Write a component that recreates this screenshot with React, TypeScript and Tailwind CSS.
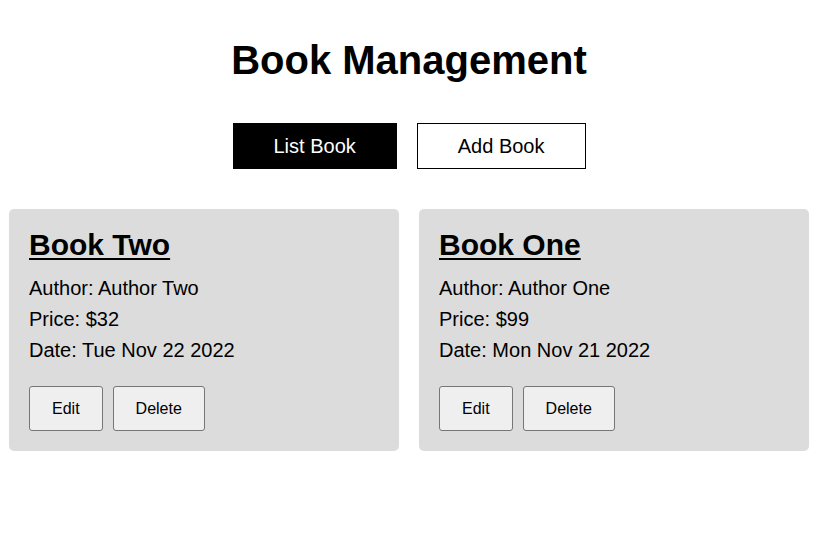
type Book = {
  id: number;
  title: string;
  author: string;
  price: number;
  date: string;
};

const BOOKS: Book[] = [
  { id: 2, title: "Book Two", author: "Author Two", price: 32, date: "Tue Nov 22 2022" },
  { id: 1, title: "Book One", author: "Author One", price: 99, date: "Mon Nov 21 2022" },
];

function BookCard({ book }: { book: Book }) {
  return (
    <div className="rounded-[5px] bg-[#dcdcdc] p-5">
      <h2 className="text-[30px] font-bold leading-[32px] underline decoration-2 underline-offset-[3px]">
        {book.title}
      </h2>
      <div className="mt-[12px] text-[20px] leading-[31px]">
        <p>Author: {book.author}</p>
        <p>Price: ${book.price}</p>
        <p>Date: {book.date}</p>
      </div>
      <div className="mt-[20px] flex gap-[10px]">
        <button className="h-[45px] rounded-[3px] border border-[#767676] bg-[#efefef] px-[22px] text-[16px] leading-[18px]">
          Edit
        </button>
        <button className="h-[45px] rounded-[3px] border border-[#767676] bg-[#efefef] px-[22px] text-[16px] leading-[18px]">
          Delete
        </button>
      </div>
    </div>
  );
}

export default function App() {
  return (
    <div className="min-h-screen bg-white text-black" style={{ fontFamily: '"Liberation Sans", Arial, sans-serif' }}>
      <div className="w-[818px] pt-10">
        <h1 className="text-center text-[40px] font-bold leading-10">Book Management</h1>

        <div className="mt-[43px] flex justify-center gap-5">
          <button className="border border-black bg-black px-10 py-[10px] text-[20px] leading-[24px] text-white">
            List Book
          </button>
          <button className="border border-black bg-white px-10 py-[10px] text-[20px] leading-[24px]">
            Add Book
          </button>
        </div>

        <div className="mx-auto mt-[40px] grid w-[800px] grid-cols-2 gap-5">
          {BOOKS.map((book) => (
            <BookCard key={book.id} book={book} />
          ))}
        </div>
      </div>
    </div>
  );
}
